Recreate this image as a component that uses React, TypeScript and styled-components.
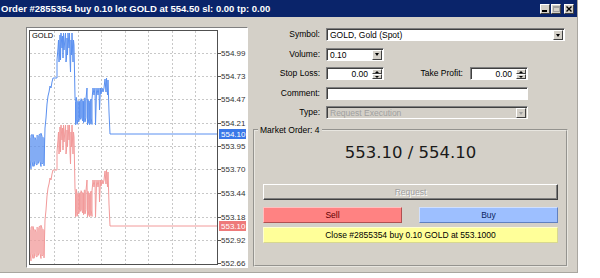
import React from 'react';
import styled, { createGlobalStyle } from 'styled-components';

const GlobalStyle = createGlobalStyle`
  body {
    margin: 0;
    background: #fff;
    font-family: 'Liberation Sans', Arial, sans-serif;
  }
`;

const Window = styled.div`
  width: 578px;
  height: 273px;
  box-sizing: border-box;
  background: #d4d0c8;
  border-right: 1px solid #a9a6a0;
  border-bottom: 1px solid #a9a6a0;
  display: flex;
  flex-direction: column;
`;

const TitleBar = styled.div`
  height: 17px;
  flex: none;
  display: flex;
  align-items: center;
  padding: 0 3px 0 1px;
  background: #0a246a;
  color: #fff;
  font-weight: bold;
  font-size: 9.5px;
`;

const TitleText = styled.span`
  flex: 1;
  white-space: nowrap;
`;

const CaptionButton = styled.span<{ $spaced?: boolean }>`
  width: 10px;
  height: 10px;
  box-sizing: border-box;
  margin-left: ${p => (p.$spaced ? '3px' : '1px')};
  background: #d4d0c8;
  border: 1px solid;
  border-color: #fff #404040 #404040 #fff;
  display: grid;
  place-items: center;
`;

const Body = styled.div`
  display: flex;
  gap: 5px;
  padding: 10px 0 0 26px;
`;

const ChartPanel = styled.div`
  width: 222px;
  height: 241px;
  box-sizing: border-box;
  background: #fff;
  border: 1px solid;
  border-color: #808080 #fff #fff #808080;

  svg {
    display: block;
  }
`;

const RightColumn = styled.div`
  width: 315px;
  padding-top: 1px;
  font-size: 8.5px;
`;

const FormGrid = styled.div`
  display: grid;
  grid-template-columns: 67px auto;
  grid-auto-rows: 13px;
  column-gap: 6px;
  row-gap: 6.5px;
  align-items: center;
`;

const FieldLabel = styled.span<{ $width?: number }>`
  text-align: right;
  line-height: 13px;
  color: #000;
  ${p => (p.$width ? `width: ${p.$width}px; flex: none;` : '')}
`;

const Row = styled.div`
  display: flex;
  align-items: center;
  gap: 7px;
`;

const Field = styled.div<{ $width: number; $disabled?: boolean; $right?: boolean }>`
  width: ${p => p.$width}px;
  height: 13px;
  box-sizing: border-box;
  display: flex;
  background: ${p => (p.$disabled ? '#d4d0c8' : '#fff')};
  border: 1px solid;
  border-color: #808080 #fff #fff #808080;
  box-shadow: inset 1px 1px #404040;
  padding: 1px 1px 0 1px;

  span {
    flex: 1;
    line-height: 10px;
    padding: 0 ${p => (p.$right ? '4px' : '2px')};
    text-align: ${p => (p.$right ? 'right' : 'left')};
    color: ${p => (p.$disabled ? '#a0a0a0' : '#000')};
    white-space: nowrap;
    overflow: hidden;
  }
`;

const ArrowButton = styled.i<{ $disabled?: boolean }>`
  width: 10px;
  height: 10px;
  box-sizing: border-box;
  flex: none;
  background: #d4d0c8;
  border: 1px solid;
  border-color: #fff #404040 #404040 #fff;
  display: grid;
  place-items: center;

  &::after {
    content: '';
    border-left: 2.5px solid transparent;
    border-right: 2.5px solid transparent;
    border-top: 3px solid ${p => (p.$disabled ? '#a0a0a0' : '#000')};
  }
`;

const Spinner = styled.i`
  width: 10px;
  height: 10px;
  flex: none;
  display: flex;
  flex-direction: column;
`;

const SpinHalf = styled.b<{ $up?: boolean }>`
  flex: 1;
  background: #d4d0c8;
  border: 1px solid;
  border-color: #fff #404040 #404040 #fff;
  display: grid;
  place-items: center;

  &::after {
    content: '';
    border-left: 2px solid transparent;
    border-right: 2px solid transparent;
    ${p => (p.$up ? 'border-bottom: 2px solid #000;' : 'border-top: 2px solid #000;')}
  }
`;

const GroupBox = styled.fieldset`
  margin: 6px 0 0 0;
  width: 315px;
  height: 142px;
  box-sizing: border-box;
  padding: 0 8px;
  border: 2px groove #e8e6e0;
  min-inline-size: 0;
`;

const Legend = styled.legend`
  font-size: 8.5px;
  line-height: 10px;
  padding: 0 2px;
  margin-left: -5px;
  color: #000;
`;

const PriceLine = styled.div`
  margin-top: 8px;
  height: 20px;
  line-height: 20px;
  text-align: center;
  font-family: 'DejaVu Sans', sans-serif;
  font-size: 16.5px;
  color: #1a1a1a;
`;

const RequestButton = styled.div`
  margin-top: 21px;
  height: 16px;
  box-sizing: border-box;
  border: 1px solid;
  border-color: #fff #404040 #404040 #fff;
  box-shadow: inset -1px -1px #808080;
  display: grid;
  place-items: center;
  color: #a0a0a0;
  text-shadow: 1px 1px #fff;
`;

const ButtonRow = styled.div`
  margin-top: 7px;
  display: flex;
  gap: 17px;
`;

const ActionButton = styled.div<{ $variant: 'sell' | 'buy' | 'close' }>`
  flex: 1;
  height: 16px;
  box-sizing: border-box;
  display: grid;
  place-items: center;
  border: 1px solid;
  background: ${p => ({ sell: '#ff8282', buy: '#9dbfff', close: '#ffff99' })[p.$variant]};
  border-color: ${p =>
    ({
      sell: '#ffc0c0 #b05050 #b05050 #ffc0c0',
      buy: '#d0e0ff #6080c0 #6080c0 #d0e0ff',
      close: '#ffffd0 #d8d890 #d8d890 #ffffd0',
    })[p.$variant]};
  color: ${p => ({ sell: '#600000', buy: '#0a1f60', close: '#000' })[p.$variant]};
  margin-top: ${p => (p.$variant === 'close' ? '4px' : '0')};
`;

// deterministic noise for the tick bands
let seed = 11;
const rand = () => {
  seed = (seed * 9301 + 49297) % 233280;
  return seed / 233280;
};

const band = (x0: number, x1: number, step: number, top: number, bottom: number) => {
  const pts: number[][] = [];
  const span = bottom - top;
  let down = true;
  for (let x = x0; x <= x1; x += step) {
    const a = top + rand() * span * 0.2;
    const b = bottom - rand() * span * 0.3;
    pts.push(down ? [x, a] : [x, b], down ? [x, b] : [x, a]);
    down = !down;
  }
  return pts;
};

const bluePoints: number[][] = [
  ...band(30, 44, 1, 133, 170),
  [45, 128], [46, 118], [47, 104], [48, 96], [49, 92], [50, 86], [51, 88], [52, 82], [53, 78], [57, 78],
  [57, 60], [58, 48], [58.5, 40], [59, 62], [59.5, 55], [60, 35], [60.5, 60], [61, 33], [62, 48],
  [62.5, 36], [63, 58], [63.5, 33], [64, 50], [65, 38], [65.5, 33], [66, 62], [66.5, 58], [67, 38],
  [67.5, 55], [68, 33], [69, 48], [69.5, 33], [70, 60], [70.5, 72], [71, 40], [71.5, 55], [72, 33],
  [73, 62], [73.5, 40], [74, 45], [75, 97],
  ...band(75.5, 86, 0.8, 97, 125),
  [87, 88], [87.5, 125],
  ...band(88, 92, 0.8, 97, 125),
  [93, 88], [94, 95], [95, 88], [95.5, 125], [96.5, 92], [97, 88], [98, 95], [99, 88], [99.5, 110],
  [100.5, 88], [101, 94], [102, 88], [103, 92], [104, 88],
  [105, 79], [106, 92], [106.5, 78], [107.5, 95], [108, 80], [109, 112], [110, 134], [217, 134],
];

const linePath = bluePoints.map((p, i) => `${i ? 'L' : 'M'}${p[0]},${p[1]}`).join('');

const priceLevels = [
  { y: 53, v: '554.99' },
  { y: 76, v: '554.73' },
  { y: 99, v: '554.47' },
  { y: 123, v: '554.21' },
  { y: 146, v: '553.95' },
  { y: 169, v: '553.70' },
  { y: 193, v: '553.44' },
  { y: 217, v: '553.18' },
  { y: 240, v: '552.92' },
  { y: 263, v: '552.66' },
];

const gridX = [54, 78, 101, 125, 148, 172, 195];

const Chart = () => (
  <svg width={220} height={239} viewBox="27 28 220 239">
    <defs>
      <clipPath id="plot">
        <rect x={30} y={31} width={187} height={233} />
      </clipPath>
    </defs>
    <g stroke="#c8c8c8" strokeWidth={1} strokeDasharray="2 2" shapeRendering="crispEdges">
      {priceLevels.slice(0, 9).map(l => (
        <line key={l.v} x1={30} x2={217} y1={l.y + 0.5} y2={l.y + 0.5} />
      ))}
      {gridX.map(x => (
        <line key={x} x1={x + 0.5} x2={x + 0.5} y1={31} y2={264} />
      ))}
    </g>
    <g clipPath="url(#plot)" fill="none" strokeWidth={1}>
      <path d={linePath} stroke="#5a90f0" />
      <path d={linePath} stroke="#f29a9a" transform="translate(0 92)" />
    </g>
    <rect x={29.5} y={30.5} width={188} height={234} fill="none" stroke="#505050" shapeRendering="crispEdges" />
    <text x={32} y={38} fontSize={7.5} fill="#000" fontFamily="Liberation Sans, sans-serif">
      GOLD
    </text>
    <g fontSize={8} fill="#333" fontFamily="Liberation Sans, sans-serif">
      {priceLevels.map(l => (
        <g key={l.v}>
          <line x1={218} x2={221} y1={l.y + 0.5} y2={l.y + 0.5} stroke="#505050" />
          <text x={221} y={l.y + 3}>
            {l.v}
          </text>
        </g>
      ))}
    </g>
    <rect x={219} y={129} width={27} height={10} fill="#3a78e8" />
    <text x={221} y={137} fontSize={8} fill="#fff" fontFamily="Liberation Sans, sans-serif">
      554.10
    </text>
    <rect x={219} y={221} width={27} height={10} fill="#ee7a7a" />
    <text x={221} y={229} fontSize={8} fill="#fff" fontFamily="Liberation Sans, sans-serif">
      553.10
    </text>
  </svg>
);

const App = () => {
  return (
    <>
      <GlobalStyle />
      <Window>
        <TitleBar>
          <TitleText>Order #2855354 buy 0.10 lot GOLD at 554.50 sl: 0.00 tp: 0.00</TitleText>
          <CaptionButton>
            <svg width={6} height={6}>
              <rect x={0} y={4} width={5} height={2} fill="#000" />
            </svg>
          </CaptionButton>
          <CaptionButton>
            <svg width={7} height={6}>
              <rect x={0.5} y={0.5} width={6} height={5} fill="none" stroke="#a0a0a0" />
              <line x1={0} x2={7} y1={1.5} y2={1.5} stroke="#a0a0a0" />
            </svg>
          </CaptionButton>
          <CaptionButton $spaced>
            <svg width={6} height={6}>
              <path d="M0.5,0.5L5.5,5.5M5.5,0.5L0.5,5.5" stroke="#000" strokeWidth={1.4} />
            </svg>
          </CaptionButton>
        </TitleBar>

        <Body>
          <ChartPanel>
            <Chart />
          </ChartPanel>

          <RightColumn>
            <FormGrid>
              <FieldLabel>Symbol:</FieldLabel>
              <Field $width={239}>
                <span>GOLD, Gold (Spot)</span>
                <ArrowButton />
              </Field>

              <FieldLabel>Volume:</FieldLabel>
              <Field $width={58}>
                <span>0.10</span>
                <ArrowButton />
              </Field>

              <FieldLabel>Stop Loss:</FieldLabel>
              <Row>
                <Field $width={58} $right>
                  <span>0.00</span>
                  <Spinner>
                    <SpinHalf $up />
                    <SpinHalf />
                  </Spinner>
                </Field>
                <FieldLabel $width={72}>Take Profit:</FieldLabel>
                <Field $width={58} $right>
                  <span>0.00</span>
                  <Spinner>
                    <SpinHalf $up />
                    <SpinHalf />
                  </Spinner>
                </Field>
              </Row>

              <FieldLabel>Comment:</FieldLabel>
              <Field $width={202}>
                <span />
              </Field>

              <FieldLabel>Type:</FieldLabel>
              <Field $width={202} $disabled>
                <span>Request Execution</span>
                <ArrowButton $disabled />
              </Field>
            </FormGrid>

            <GroupBox>
              <Legend>Market Order: 4</Legend>
              <PriceLine>553.10 / 554.10</PriceLine>
              <RequestButton>Request</RequestButton>
              <ButtonRow>
                <ActionButton $variant="sell">Sell</ActionButton>
                <ActionButton $variant="buy">Buy</ActionButton>
              </ButtonRow>
              <ActionButton $variant="close">Close #2855354 buy 0.10 GOLD at 553.1000</ActionButton>
            </GroupBox>
          </RightColumn>
        </Body>
      </Window>
    </>
  );
};

export default App;
